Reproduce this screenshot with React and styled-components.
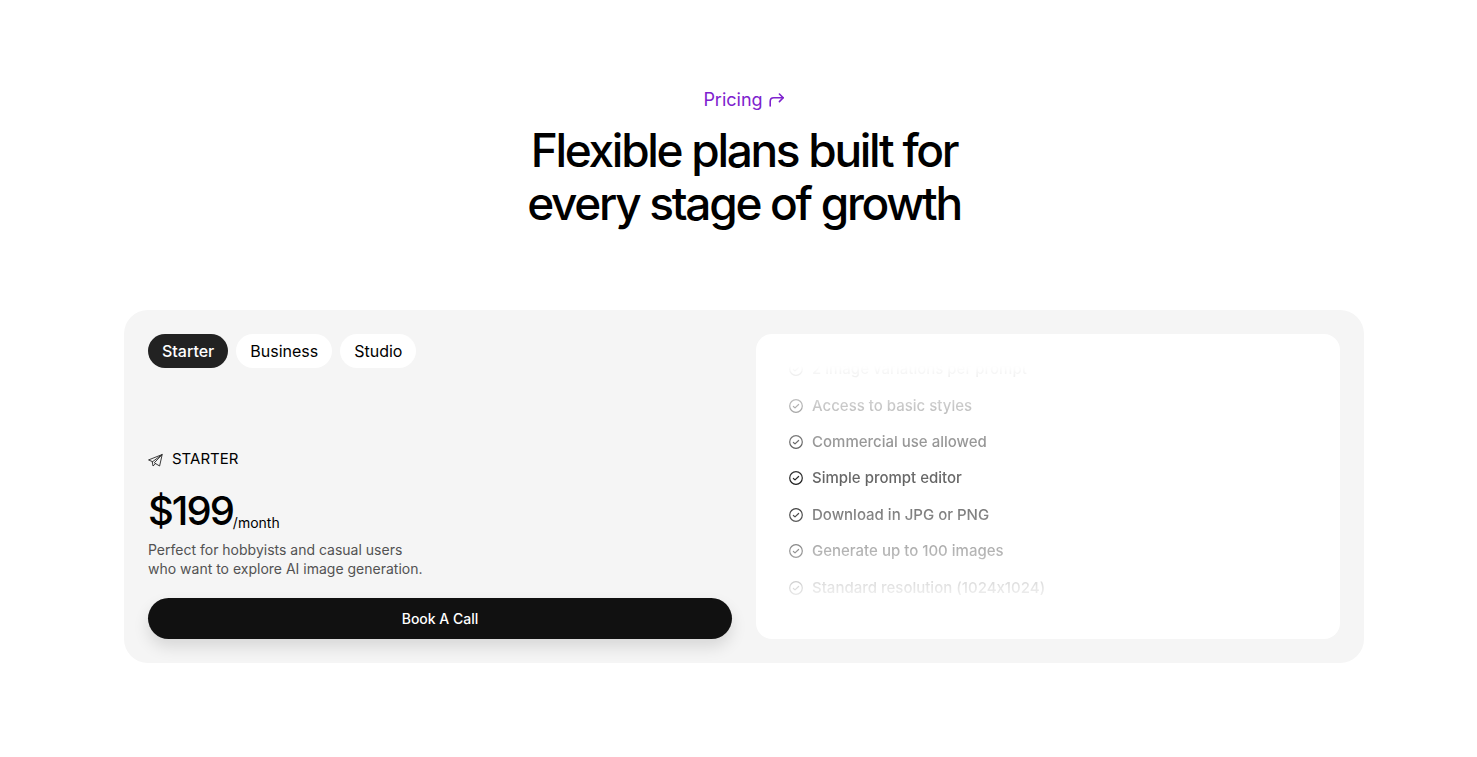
import { useState } from "react";
import styled, { createGlobalStyle } from "styled-components";

const plans = [
  {
    name: "Starter",
    price: "$199",
    description: [
      "Perfect for hobbyists and casual users",
      "who want to explore AI image generation.",
    ],
    features: [
      "2 image variations per prompt",
      "Access to basic styles",
      "Commercial use allowed",
      "Simple prompt editor",
      "Download in JPG or PNG",
      "Generate up to 100 images",
      "Standard resolution (1024x1024)",
    ],
  },
  { name: "Business" },
  { name: "Studio" },
];

const ForwardIcon = () => (
  <Icon viewBox="0 0 16 16" $stroke={1.6} aria-hidden="true">
    <path d="M1.2 14V9.4C1.2 7 2.4 5.8 4.8 5.8H14.2" />
    <path d="M10.4 2L14.2 5.8L10.4 9.6" />
  </Icon>
);

const PlaneIcon = () => (
  <Icon viewBox="0 0 16 16" $stroke={0.9} aria-hidden="true">
    <path d="M0.9 8.8L14.2 3.5L11.6 15L7.6 12.6L5 15L4.3 10.9Z" />
    <path d="M4.3 10.9L14.2 3.5L6.3 11.8L7.6 12.6" />
  </Icon>
);

const CheckIcon = () => (
  <Icon viewBox="0 0 16 16" $stroke={1.2} aria-hidden="true">
    <circle cx="8" cy="8" r="6.3" />
    <path d="M5.4 8.5L7 9.9L10.6 6.5" />
  </Icon>
);

const App = () => {
  const [selected, setSelected] = useState("Starter");
  const plan = plans[0];

  return (
    <>
      <GlobalStyle />
      <PricingSection>
        <SectionHeader>
          <SectionLink href="#pricing">
            Pricing
            <ForwardIcon />
          </SectionLink>
          <Title>
            Flexible plans built for
            <br />
            every stage of growth
          </Title>
        </SectionHeader>
        <PricingCard>
          <PlanColumn>
            <TabList>
              {plans.map(({ name }) => (
                <Tab
                  key={name}
                  type="button"
                  $active={name === selected}
                  onClick={() => setSelected(name)}
                >
                  {name}
                </Tab>
              ))}
            </TabList>
            <PlanDetails>
              <PlanName>
                <PlaneIcon />
                {plan.name}
              </PlanName>
              <PriceRow>
                <Price>{plan.price}</Price>
                <Period>/month</Period>
              </PriceRow>
              <Description>
                {plan.description[0]}
                <br />
                {plan.description[1]}
              </Description>
              <CallButton type="button">Book A Call</CallButton>
            </PlanDetails>
          </PlanColumn>
          <FeaturePanel>
            <FeatureWindow>
              <FeatureList>
                {plan.features.map((feature) => (
                  <Feature key={feature}>
                    <CheckIcon />
                    {feature}
                  </Feature>
                ))}
              </FeatureList>
            </FeatureWindow>
          </FeaturePanel>
        </PricingCard>
      </PricingSection>
    </>
  );
};

export default App;

const GlobalStyle = createGlobalStyle`
  * {
    box-sizing: border-box;
  }

  body {
    margin: 0;
    background-color: white;
    color: black;
    font-family: Inter, "Liberation Sans", sans-serif;
    font-feature-settings: "calt" 0;
  }

  h1, h2, p, ul {
    margin: 0;
    padding: 0;
  }

  button {
    border: none;
    font-family: inherit;
    cursor: pointer;
  }
`;

const Icon = styled.svg`
  flex-shrink: 0;
  width: 16px;
  height: 16px;
  fill: none;
  stroke: currentColor;
  stroke-width: ${({ $stroke }) => $stroke};
  stroke-linecap: round;
  stroke-linejoin: round;
`;

const PricingSection = styled.section`
  display: flex;
  flex-direction: column;
  align-items: center;
  gap: 80px;
  padding: 88px 0 94px 11px;
`;

const SectionHeader = styled.header`
  display: flex;
  flex-direction: column;
  align-items: center;
  gap: 12px;
`;

const SectionLink = styled.a`
  display: flex;
  align-items: center;
  gap: 6px;
  color: #7e22ce;
  font-size: 18px;
  line-height: 24px;
  text-decoration: none;
`;

const Title = styled.h2`
  font-size: 46px;
  font-weight: 500;
  line-height: 53px;
  letter-spacing: -0.05em;
  text-align: center;
`;

const PricingCard = styled.div`
  display: grid;
  grid-template-columns: 1fr 1fr;
  gap: 24px;
  width: 100%;
  max-width: 1240px;
  padding: 24px;
  border-radius: 24px;
  background-color: #f5f5f5;
`;

const PlanColumn = styled.div`
  display: flex;
  flex-direction: column;
  justify-content: space-between;
`;

const TabList = styled.div`
  display: flex;
  gap: 8px;
`;

const Tab = styled.button`
  padding: 5px 14px;
  border-radius: 17px;
  background-color: ${({ $active }) => ($active ? "#222222" : "white")};
  color: ${({ $active }) => ($active ? "white" : "black")};
  font-size: 16px;
  font-weight: ${({ $active }) => ($active ? 500 : 400)};
  line-height: 24px;
`;

const PlanDetails = styled.div`
  display: flex;
  flex-direction: column;
`;

const PlanName = styled.div`
  display: flex;
  align-items: center;
  gap: 8px;
  font-size: 15px;
  line-height: 24px;
  text-transform: uppercase;

  svg {
    color: #262626;
  }
`;

const PriceRow = styled.div`
  display: flex;
  align-items: flex-end;
  margin-top: 16px;
`;

const Price = styled.span`
  font-size: 40px;
  font-weight: 500;
  line-height: 48px;
  letter-spacing: -0.05em;
`;

const Period = styled.span`
  font-size: 14px;
  line-height: 24px;
`;

const Description = styled.p`
  margin-top: 5px;
  color: #525252;
  font-size: 14px;
  line-height: 19px;
`;

const CallButton = styled.button`
  margin-top: 20px;
  padding: 10px 24px;
  border-radius: 21px;
  background-color: #111111;
  box-shadow: 0 8px 16px rgba(0, 0, 0, 0.12);
  color: white;
  font-size: 14px;
  font-weight: 500;
  line-height: 21px;
`;

const FeaturePanel = styled.div`
  padding: 32px;
  border-radius: 16px;
  background-color: white;
`;

const FeatureWindow = styled.div`
  height: 241px;
  overflow: hidden;
  mask-image: linear-gradient(to bottom, transparent, black 50%, transparent);
`;

const FeatureList = styled.ul`
  display: grid;
  grid-auto-rows: 1fr;
  height: 255px;
  margin-top: -15px;
  list-style: none;
`;

const Feature = styled.li`
  display: flex;
  align-items: center;
  gap: 8px;
  color: #5c5c5c;
  font-size: 15px;
  font-weight: 500;
  line-height: 24px;

  svg {
    color: #171717;
  }
`;
